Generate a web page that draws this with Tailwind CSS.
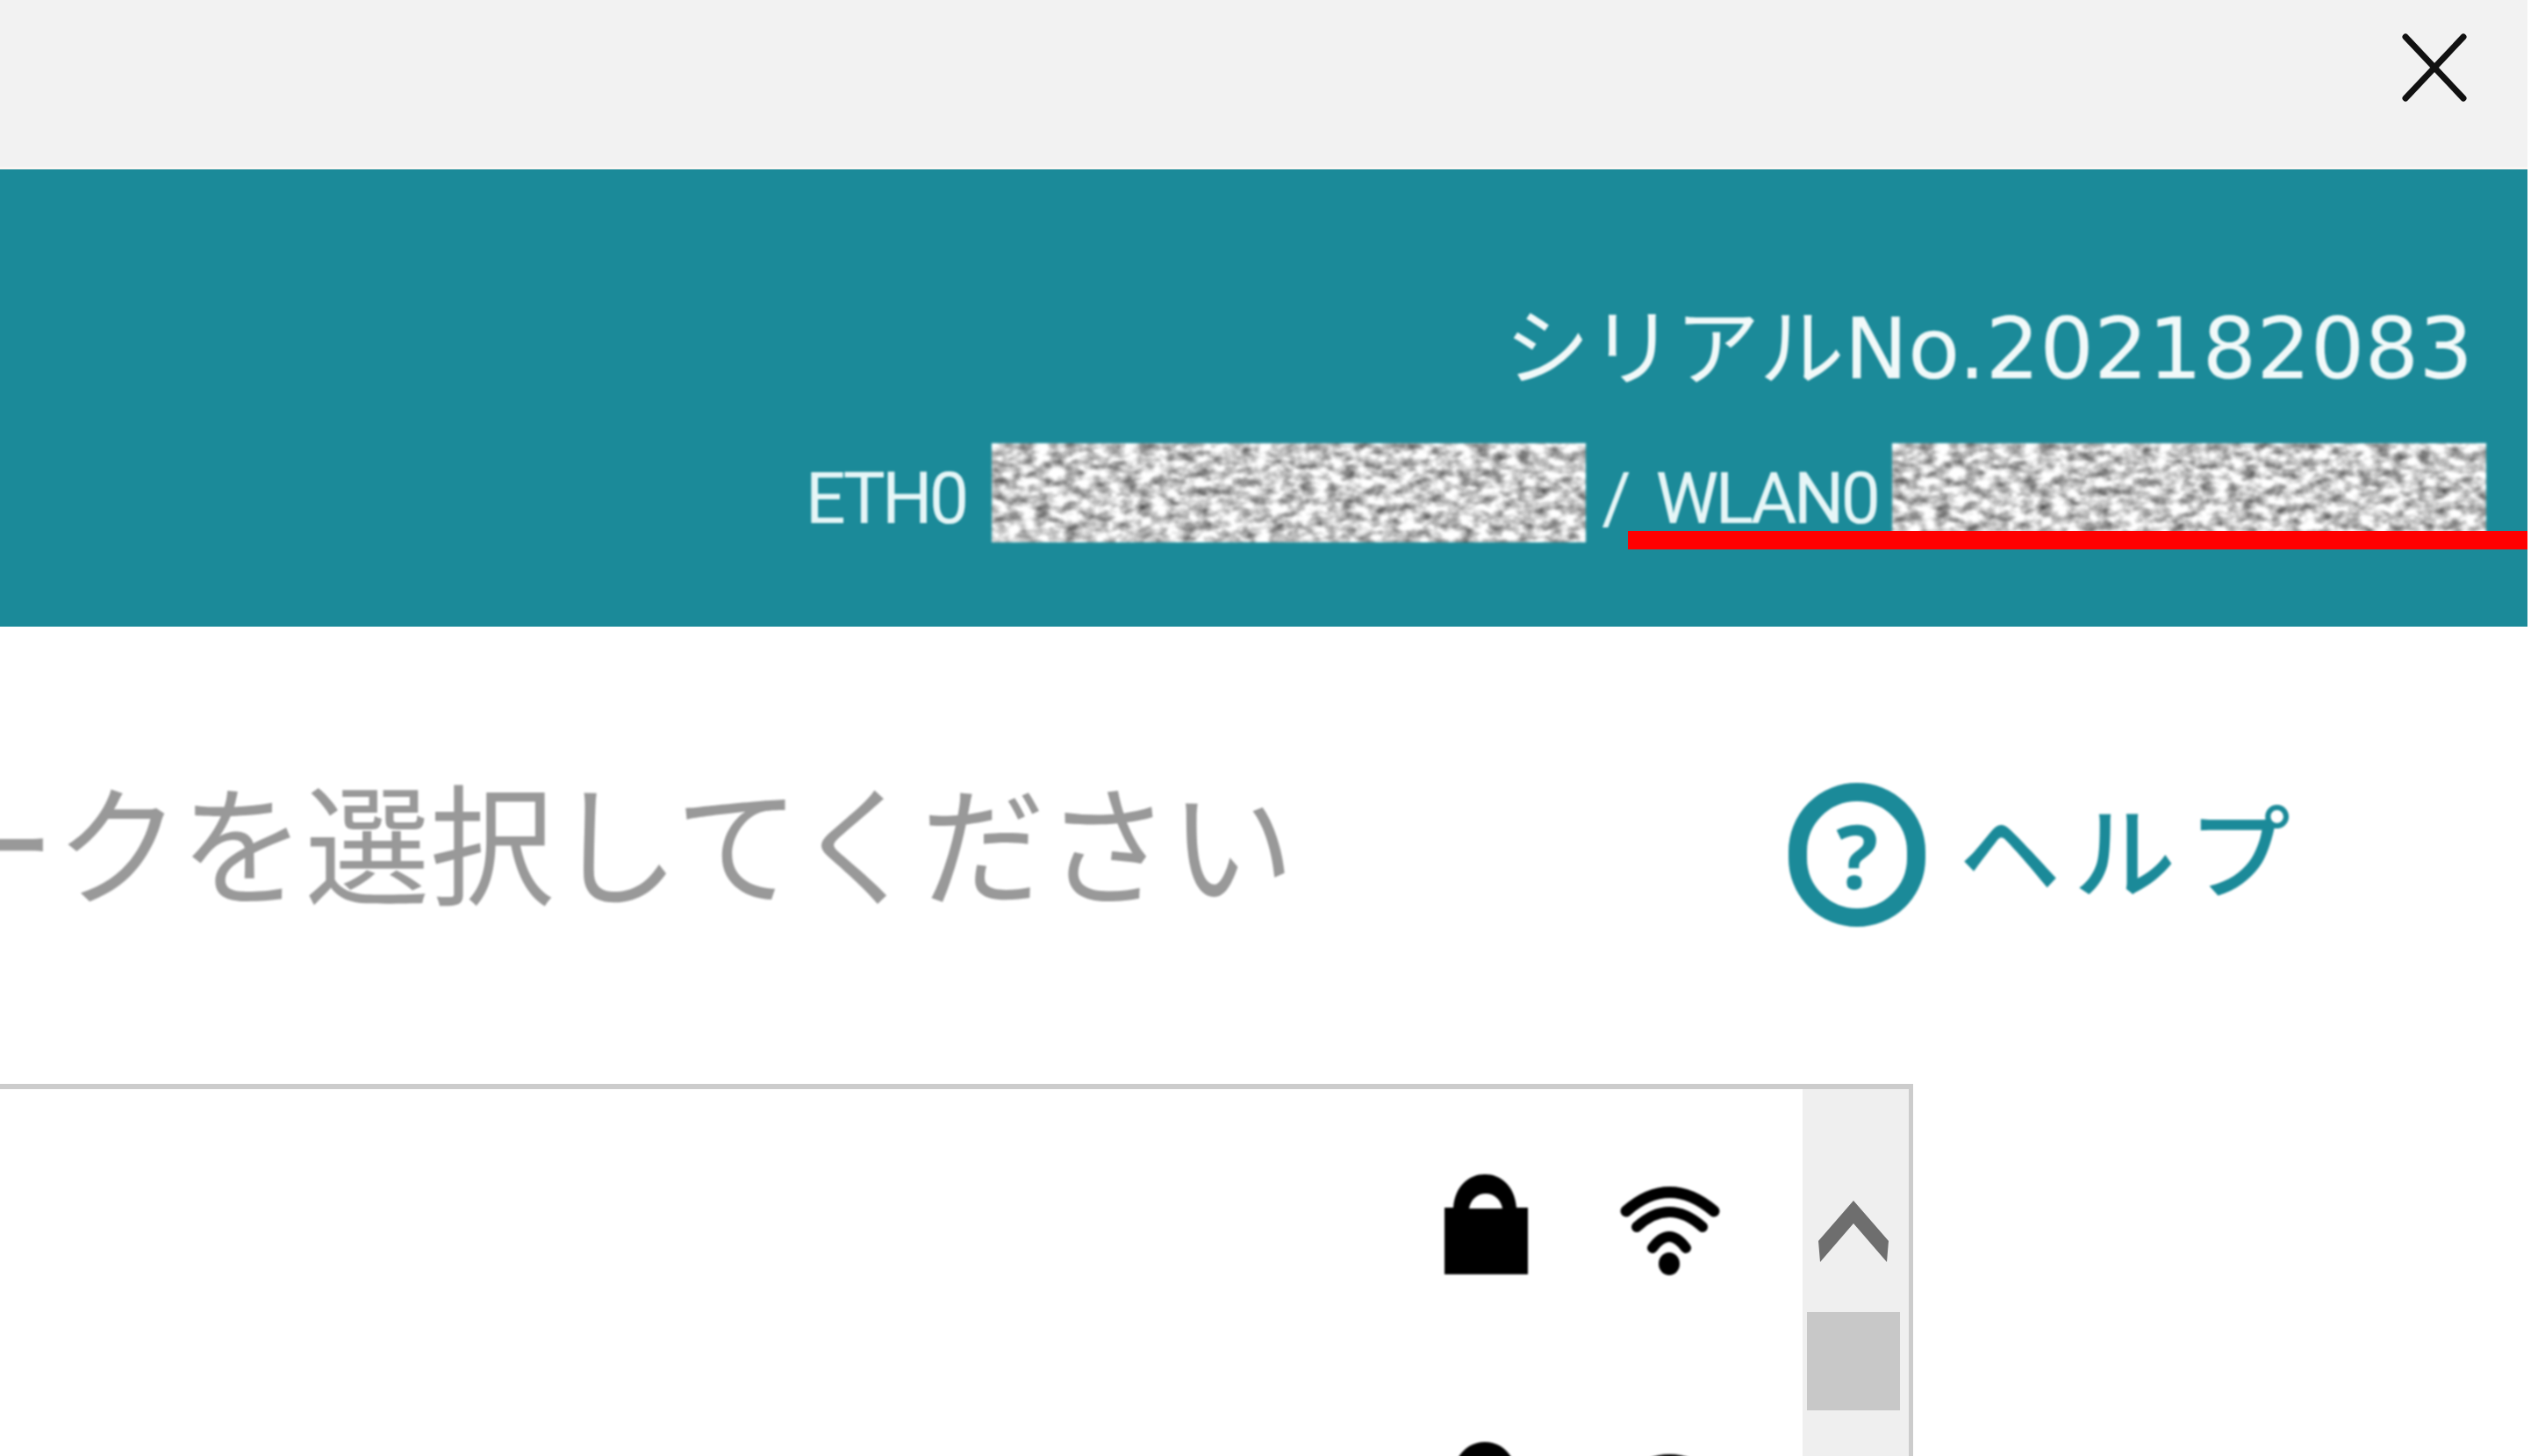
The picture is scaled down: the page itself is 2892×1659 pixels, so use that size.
<!DOCTYPE html>
<html lang="ja">
<head>
    <meta charset="UTF-8">
    <title>ネットワーク選択</title>
    <script src="https://cdn.jsdelivr.net/npm/@tailwindcss/browser@4"></script>
</head>
<body class="bg-white">
    <div class="relative w-[2892px] h-[1659px] overflow-hidden bg-white">
        <div class="w-[2880px]">
            <!-- Title bar -->
            <div class="h-[190px] bg-[#f2f2f2] flex justify-end pt-[37px] pr-[66px]">
                <svg class="w-[80px] h-[80px] blur-[0.5px]" viewBox="0 0 80 80" fill="none" stroke="#111" stroke-width="7" stroke-linecap="round">
                    <path d="M7 5 L73 75 M73 5 L7 75"/>
                </svg>
            </div>
            <div class="h-[3px] bg-[#fbf6f3]"></div>

            <!-- Device info -->
            <div class="h-[521px] bg-[#1b8a99] flex flex-col items-end">
                <div class="mt-[145px] mr-[62px] h-[120px] leading-[120px] text-[97px] text-[#f1f9f9] whitespace-nowrap font-['DejaVu_Sans','Noto_Sans_CJK_JP',sans-serif] blur-[1px]">シリアルNo.202182083</div>
                <div class="mt-[47px] mr-[47px] h-[113px] flex items-center text-[81px] text-[#e6f6f7] font-['Roboto',sans-serif] whitespace-nowrap">
                    <span class="tracking-[-4px] mt-[14px] blur-[1px]">ETH0</span>
                    <svg class="ml-[30px] w-[677px] h-[113px] block blur-[1.5px]" viewBox="0 0 677 113">
                        <filter id="noise" x="0" y="0" width="100%" height="100%" color-interpolation-filters="sRGB">
                            <feTurbulence type="fractalNoise" baseFrequency="0.06 0.1" numOctaves="3" seed="4"/>
                            <feColorMatrix type="matrix" values="1.2 0 0 0 0.2 1.2 0 0 0 0.2 1.2 0 0 0 0.2 0 0 0 0 1"/>
                        </filter>
                        <rect width="677" height="113" filter="url(#noise)"/>
                    </svg>
                    <span class="ml-[18px] mt-[14px] blur-[1px]">/</span>
                    <span class="ml-[28px] tracking-[-4px] mt-[14px] blur-[1px]">WLAN0</span>
                    <svg class="ml-[17px] w-[677px] h-[113px] block blur-[1.5px]" viewBox="0 0 677 113">
                        <rect width="677" height="113" filter="url(#noise)"/>
                    </svg>
                </div>
            </div>

            <!-- Heading -->
            <div class="h-[521px] flex items-start pt-[146px]">
                <div class="w-[1475px] h-[190px] flex justify-end overflow-hidden">
                    <span class="shrink-0 text-[142px] leading-[190px] text-[#999] whitespace-nowrap scale-y-105 font-['Noto_Sans_CJK_JP',sans-serif] blur-[1px]">ネットワークを選択してください</span>
                </div>
                <div class="ml-[563px] mt-[32px] w-[156px] h-[164px] shrink-0 rounded-full border-[21px] border-[#1b8a99] flex items-center justify-center text-[100px] leading-none font-bold text-[#1b8a99] font-['Noto_Sans',sans-serif] blur-[1px]">?</div>
                <div class="ml-[38px] mt-[19px] text-[116px] leading-[170px] tracking-[15px] font-medium text-[#1b8a99] whitespace-nowrap font-['Noto_Sans_CJK_JP',sans-serif] blur-[1px]">ヘルプ</div>
            </div>

            <!-- Network list -->
            <div class="w-[2180px] h-[424px] border-t-[6px] border-r-[5px] border-[#ccc] flex overflow-hidden">
                <div class="flex-1">
                    <div class="h-[305px] pt-[97px] pr-[93px] flex justify-end items-start gap-[104px]">
                        <svg class="w-[95px] h-[114px] shrink-0 blur-[1px]" viewBox="0 0 95 114" fill="#000">
                            <path fill-rule="evenodd" d="M10 38 C12 13 28 0 46 0 C64 0 80 13 82 38 L95 38 L95 114 L0 114 L0 38 Z M28 39 L66 39 C64 28 56 22 47 22 C38 22 30 28 28 39 Z"/>
                        </svg>
                        <svg class="w-[116px] h-[101px] mt-[14px] shrink-0 blur-[1px]" viewBox="0 0 116 101" fill="none" stroke="#000" stroke-linecap="round">
                            <path stroke-width="13" d="M8 28 Q57 -15 108 28"/>
                            <path stroke-width="12" d="M20 46 Q57 12 95 46"/>
                            <path stroke-width="12" d="M38 70 Q57 44 76 70"/>
                            <ellipse cx="57" cy="88" rx="12" ry="13" fill="#000" stroke="none"/>
                        </svg>
                    </div>
                    <div class="h-[305px] pt-[97px] pr-[93px] flex justify-end items-start gap-[104px]">
                        <svg class="w-[95px] h-[114px] shrink-0 blur-[1px]" viewBox="0 0 95 114" fill="#000">
                            <path fill-rule="evenodd" d="M10 38 C12 13 28 0 46 0 C64 0 80 13 82 38 L95 38 L95 114 L0 114 L0 38 Z M28 39 L66 39 C64 28 56 22 47 22 C38 22 30 28 28 39 Z"/>
                        </svg>
                        <svg class="w-[116px] h-[101px] mt-[14px] shrink-0 blur-[1px]" viewBox="0 0 116 101" fill="none" stroke="#000" stroke-linecap="round">
                            <path stroke-width="13" d="M8 28 Q57 -15 108 28"/>
                            <path stroke-width="12" d="M20 46 Q57 12 95 46"/>
                            <path stroke-width="12" d="M38 70 Q57 44 76 70"/>
                            <ellipse cx="57" cy="88" rx="12" ry="13" fill="#000" stroke="none"/>
                        </svg>
                    </div>
                </div>
                <!-- Scrollbar -->
                <div class="w-[121px] shrink-0 bg-[#efefef] flex flex-col items-center pt-[127px] pr-[6px]">
                    <svg class="w-[80px] h-[70px] shrink-0 blur-[0.5px]" viewBox="0 0 80 70" fill="#6e6e6e">
                        <path d="M40 0 L80 46 L78 70 L40 26 L2 70 L0 46 Z"/>
                    </svg>
                    <div class="mt-[57px] w-[106px] h-[112px] shrink-0 bg-[#c8c8c8]"></div>
                </div>
            </div>
        </div>

        <!-- Red annotation underline -->
        <div class="absolute left-[1855px] top-[605px] w-[1025px] h-[21px] bg-[#f00]"></div>
    </div>
</body>
</html>
